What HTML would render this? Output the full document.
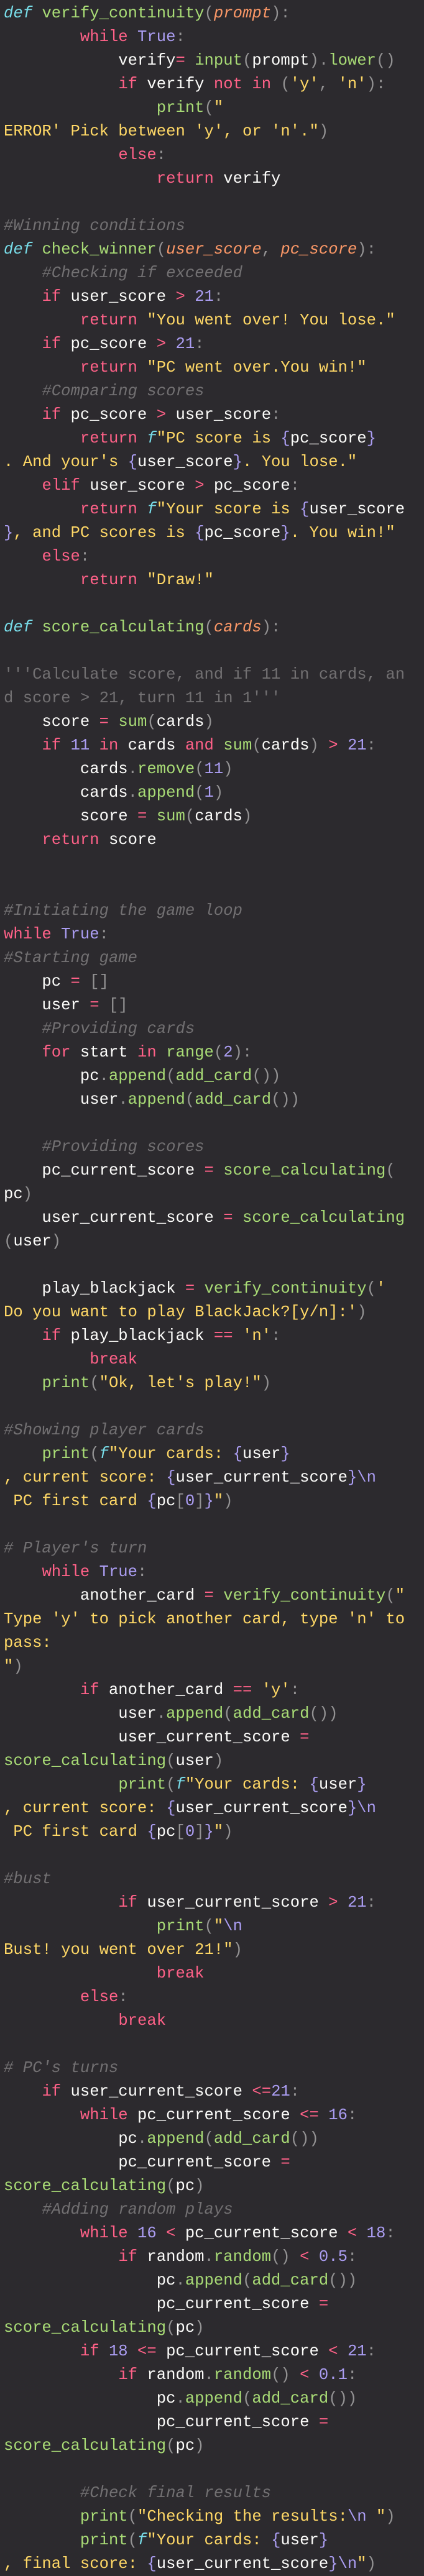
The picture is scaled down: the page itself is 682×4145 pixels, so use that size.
<!DOCTYPE html>
<html><head><meta charset="utf-8"><style>
html,body{margin:0;padding:0;background:#2c2a2e;}
body{width:682px;height:4141px;overflow:hidden;}
pre{margin:0;padding:3px 0 0 6px;font-family:"Liberation Mono",monospace;font-size:25.6px;line-height:38px;color:#fcfcfa;white-space:pre;}
.k{color:#ff6188}.d{color:#78dce8;font-style:italic}.f{color:#a9dc76}.p{color:#fc9867;font-style:italic}
.s{color:#ffd866}.n{color:#ab9df2}.c{color:#727072;font-style:italic}.o{color:#939293}.q{color:#727072}
</style></head><body><pre><span class="d">def</span> <span class="f">verify_continuity</span><span class="o">(</span><span class="p">prompt</span><span class="o">):</span>
        <span class="k">while</span> <span class="n">True</span><span class="o">:</span>
            verify<span class="k">=</span> <span class="f">input</span><span class="o">(</span>prompt<span class="o">).</span><span class="f">lower</span><span class="o">()</span>
            <span class="k">if</span> verify <span class="k">not in</span> <span class="o">(</span><span class="s">'y'</span><span class="o">,</span> <span class="s">'n'</span><span class="o">):</span>
                <span class="f">print</span><span class="o">(</span><span class="s">"</span>
<span class="s">ERROR' Pick between 'y', or 'n'."</span><span class="o">)</span>
            <span class="k">else</span><span class="o">:</span>
                <span class="k">return</span> verify

<span class="c">#Winning conditions</span>
<span class="d">def</span> <span class="f">check_winner</span><span class="o">(</span><span class="p">user_score</span><span class="o">,</span> <span class="p">pc_score</span><span class="o">):</span>
    <span class="c">#Checking if exceeded</span>
    <span class="k">if</span> user_score <span class="k">&gt;</span> <span class="n">21</span><span class="o">:</span>
        <span class="k">return</span> <span class="s">"You went over! You lose."</span>
    <span class="k">if</span> pc_score <span class="k">&gt;</span> <span class="n">21</span><span class="o">:</span>
        <span class="k">return</span> <span class="s">"PC went over.You win!"</span>
    <span class="c">#Comparing scores</span>
    <span class="k">if</span> pc_score <span class="k">&gt;</span> user_score<span class="o">:</span>
        <span class="k">return</span> <span class="d">f</span><span class="s">"PC score is </span><span class="n">{</span>pc_score<span class="n">}</span>
<span class="s">. And your's </span><span class="n">{</span>user_score<span class="n">}</span><span class="s">. You lose."</span>
    <span class="k">elif</span> user_score <span class="k">&gt;</span> pc_score<span class="o">:</span>
        <span class="k">return</span> <span class="d">f</span><span class="s">"Your score is </span><span class="n">{</span>user_score
<span class="n">}</span><span class="s">, and PC scores is </span><span class="n">{</span>pc_score<span class="n">}</span><span class="s">. You win!"</span>
    <span class="k">else</span><span class="o">:</span>
        <span class="k">return</span> <span class="s">"Draw!"</span>

<span class="d">def</span> <span class="f">score_calculating</span><span class="o">(</span><span class="p">cards</span><span class="o">):</span>

<span class="q">'''Calculate score, and if 11 in cards, an</span>
<span class="q">d score &gt; 21, turn 11 in 1'''</span>
    score <span class="k">=</span> <span class="f">sum</span><span class="o">(</span>cards<span class="o">)</span>
    <span class="k">if</span> <span class="n">11</span> <span class="k">in</span> cards <span class="k">and</span> <span class="f">sum</span><span class="o">(</span>cards<span class="o">)</span> <span class="k">&gt;</span> <span class="n">21</span><span class="o">:</span>
        cards<span class="o">.</span><span class="f">remove</span><span class="o">(</span><span class="n">11</span><span class="o">)</span>
        cards<span class="o">.</span><span class="f">append</span><span class="o">(</span><span class="n">1</span><span class="o">)</span>
        score <span class="k">=</span> <span class="f">sum</span><span class="o">(</span>cards<span class="o">)</span>
    <span class="k">return</span> score


<span class="c">#Initiating the game loop</span>
<span class="k">while</span> <span class="n">True</span><span class="o">:</span>
<span class="c">#Starting game</span>
    pc <span class="k">=</span> <span class="o">[]</span>
    user <span class="k">=</span> <span class="o">[]</span>
    <span class="c">#Providing cards</span>
    <span class="k">for</span> start <span class="k">in</span> <span class="f">range</span><span class="o">(</span><span class="n">2</span><span class="o">):</span>
        pc<span class="o">.</span><span class="f">append</span><span class="o">(</span><span class="f">add_card</span><span class="o">())</span>
        user<span class="o">.</span><span class="f">append</span><span class="o">(</span><span class="f">add_card</span><span class="o">())</span>

    <span class="c">#Providing scores</span>
    pc_current_score <span class="k">=</span> <span class="f">score_calculating</span><span class="o">(</span>
pc<span class="o">)</span>
    user_current_score <span class="k">=</span> <span class="f">score_calculating</span>
<span class="o">(</span>user<span class="o">)</span>

    play_blackjack <span class="k">=</span> <span class="f">verify_continuity</span><span class="o">(</span><span class="s">'</span>
<span class="s">Do you want to play BlackJack?[y/n]:'</span><span class="o">)</span>
    <span class="k">if</span> play_blackjack <span class="k">==</span> <span class="s">'n'</span><span class="o">:</span>
         <span class="k">break</span>
    <span class="f">print</span><span class="o">(</span><span class="s">"Ok, let's play!"</span><span class="o">)</span>

<span class="c">#Showing player cards</span>
    <span class="f">print</span><span class="o">(</span><span class="d">f</span><span class="s">"Your cards: </span><span class="n">{</span>user<span class="n">}</span>
<span class="s">, current score: </span><span class="n">{</span>user_current_score<span class="n">}\n</span>
<span class="s"> PC first card </span><span class="n">{</span>pc<span class="o">[</span><span class="n">0</span><span class="o">]</span><span class="n">}</span><span class="s">"</span><span class="o">)</span>

<span class="c"># Player's turn</span>
    <span class="k">while</span> <span class="n">True</span><span class="o">:</span>
        another_card <span class="k">=</span> <span class="f">verify_continuity</span><span class="o">(</span><span class="s">"</span>
<span class="s">Type 'y' to pick another card, type 'n' to</span>
<span class="s">pass:</span>
<span class="s">"</span><span class="o">)</span>
        <span class="k">if</span> another_card <span class="k">==</span> <span class="s">'y'</span><span class="o">:</span>
            user<span class="o">.</span><span class="f">append</span><span class="o">(</span><span class="f">add_card</span><span class="o">())</span>
            user_current_score <span class="k">=</span>
<span class="f">score_calculating</span><span class="o">(</span>user<span class="o">)</span>
            <span class="f">print</span><span class="o">(</span><span class="d">f</span><span class="s">"Your cards: </span><span class="n">{</span>user<span class="n">}</span>
<span class="s">, current score: </span><span class="n">{</span>user_current_score<span class="n">}\n</span>
<span class="s"> PC first card </span><span class="n">{</span>pc<span class="o">[</span><span class="n">0</span><span class="o">]</span><span class="n">}</span><span class="s">"</span><span class="o">)</span>

<span class="c">#bust</span>
            <span class="k">if</span> user_current_score <span class="k">&gt;</span> <span class="n">21</span><span class="o">:</span>
                <span class="f">print</span><span class="o">(</span><span class="s">"</span><span class="n">\n</span>
<span class="s">Bust! you went over 21!"</span><span class="o">)</span>
                <span class="k">break</span>
        <span class="k">else</span><span class="o">:</span>
            <span class="k">break</span>

<span class="c"># PC's turns</span>
    <span class="k">if</span> user_current_score <span class="k">&lt;=</span><span class="n">21</span><span class="o">:</span>
        <span class="k">while</span> pc_current_score <span class="k">&lt;=</span> <span class="n">16</span><span class="o">:</span>
            pc<span class="o">.</span><span class="f">append</span><span class="o">(</span><span class="f">add_card</span><span class="o">())</span>
            pc_current_score <span class="k">=</span>
<span class="f">score_calculating</span><span class="o">(</span>pc<span class="o">)</span>
    <span class="c">#Adding random plays</span>
        <span class="k">while</span> <span class="n">16</span> <span class="k">&lt;</span> pc_current_score <span class="k">&lt;</span> <span class="n">18</span><span class="o">:</span>
            <span class="k">if</span> random<span class="o">.</span><span class="f">random</span><span class="o">()</span> <span class="k">&lt;</span> <span class="n">0.5</span><span class="o">:</span>
                pc<span class="o">.</span><span class="f">append</span><span class="o">(</span><span class="f">add_card</span><span class="o">())</span>
                pc_current_score <span class="k">=</span>
<span class="f">score_calculating</span><span class="o">(</span>pc<span class="o">)</span>
        <span class="k">if</span> <span class="n">18</span> <span class="k">&lt;=</span> pc_current_score <span class="k">&lt;</span> <span class="n">21</span><span class="o">:</span>
            <span class="k">if</span> random<span class="o">.</span><span class="f">random</span><span class="o">()</span> <span class="k">&lt;</span> <span class="n">0.1</span><span class="o">:</span>
                pc<span class="o">.</span><span class="f">append</span><span class="o">(</span><span class="f">add_card</span><span class="o">())</span>
                pc_current_score <span class="k">=</span>
<span class="f">score_calculating</span><span class="o">(</span>pc<span class="o">)</span>

        <span class="c">#Check final results</span>
        <span class="f">print</span><span class="o">(</span><span class="s">"Checking the results:</span><span class="n">\n</span><span class="s"> "</span><span class="o">)</span>
        <span class="f">print</span><span class="o">(</span><span class="d">f</span><span class="s">"Your cards: </span><span class="n">{</span>user<span class="n">}</span>
<span class="s">, final score: </span><span class="n">{</span>user_current_score<span class="n">}\n</span><span class="s">"</span><span class="o">)</span></pre></body></html>
